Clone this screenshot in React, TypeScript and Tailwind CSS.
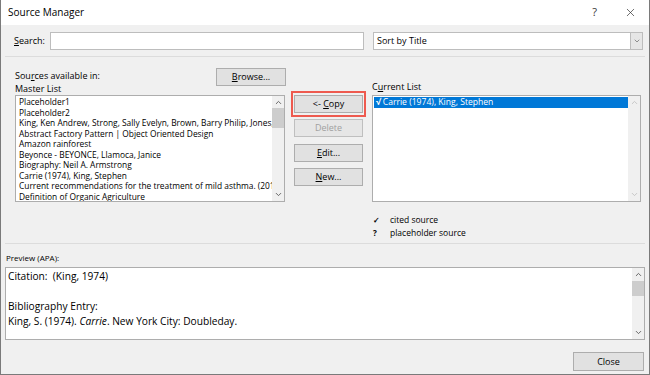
import { ChevronDown, ChevronUp, X } from 'lucide-react'

const ui = { fontFamily: '"Open Sans", "Noto Sans", sans-serif' }
const preview = { fontFamily: '"Open Sans", "Noto Sans", sans-serif' }

const masterList = [
  'Placeholder1',
  'Placeholder2',
  'King, Ken Andrew, Strong, Sally Evelyn, Brown, Barry Philip, Jones, Julie',
  'Abstract Factory Pattern | Object Oriented Design',
  'Amazon rainforest',
  'Beyonce - BEYONCE, Llamoca, Janice',
  'Biography: Neil A. Armstrong',
  'Carrie (1974), King, Stephen',
  'Current recommendations for the treatment of mild asthma. (2010), Sh',
  'Definition of Organic Agriculture',
]

// ---------------------------------------------------------------------------
// Scrollbar
// ---------------------------------------------------------------------------
function ScrollBar({ thumbTop, thumbHeight, disabled }: { thumbTop?: number; thumbHeight?: number; disabled?: boolean }) {
  const arrow = disabled ? 'text-[#c4c4c4]' : 'text-[#606060]'
  return (
    <div className="relative flex w-[12px] shrink-0 flex-col items-center justify-between bg-[#f0f0f0]">
      <ChevronUp size={9} strokeWidth={2.5} className={`mt-[2px] ${arrow}`} />
      {thumbHeight ? (
        <div className="absolute left-0 w-[12px] bg-[#cdcdcd]" style={{ top: thumbTop, height: thumbHeight }} />
      ) : null}
      <ChevronDown size={9} strokeWidth={2.5} className={`mb-[2px] ${arrow}`} />
    </div>
  )
}

function Btn({ children, disabled, className = '' }: { children: React.ReactNode; disabled?: boolean; className?: string }) {
  return (
    <div
      className={`flex h-[18px] items-center justify-center border border-[#adadad] bg-[#e1e1e1] text-[9px] ${disabled ? 'text-[#a0a0a0] border-[#bfbfbf] bg-[#e6e6e6]' : 'text-black'} ${className}`}
    >
      {children}
    </div>
  )
}

export default function App() {
  return (
    <div className="flex h-[375px] w-[650px] flex-col overflow-hidden border border-t-0 border-[#7a7a7a] bg-[#f0f0f0] text-black" style={ui}>
      {/* Title bar */}
      <div className="flex h-[25px] shrink-0 items-center bg-white pl-[7px] pr-[12px] text-[10px]">
        <span>Source Manager</span>
        <span className="ml-auto mr-[27px] text-[11px] text-[#333]">?</span>
        <X size={13} strokeWidth={1.3} className="text-[#333]" />
      </div>

      {/* Search row */}
      <div className="mt-[7px] flex h-[18px] items-center pr-[6px] text-[9px]">
        <span className="w-[49px] pl-[13px]"><u>S</u>earch:</span>
        <div className="h-[18px] w-[314px] border border-[#bdbdbd] bg-white" />
        <div className="ml-[9px] flex h-[18px] flex-1 items-center border border-[#bdbdbd] bg-white pl-[3px]">
          <span>Sort by Title</span>
          <div className="ml-auto flex h-full w-[12px] items-center justify-center border-l border-[#bdbdbd] bg-[#e6e6e6]">
            <ChevronDown size={8} strokeWidth={2} className="text-[#606060]" />
          </div>
        </div>
      </div>

      <div className="mx-[4px] mt-[6px] h-px bg-[#dcdcdc]" />

      {/* Main section */}
      <div className="mt-[11px] grid grid-cols-[270px_69px_269px] gap-x-[9px] pl-[14px] text-[9px]">
        {/* Master list column */}
        <div className="flex flex-col">
          <div className="flex h-[26px] items-start justify-between">
            <div className="flex flex-col leading-[13px] pt-px">
              <span>Sou<u>r</u>ces available in:</span>
              <span>Master List</span>
            </div>
            <Btn className="w-[70px] mr-[-1px]"><u>B</u>rowse...</Btn>
          </div>
          <div className="mt-[1px] flex h-[107px] border border-[#adadad] bg-white">
            <div className="flex-1 overflow-hidden pl-[3px] pt-px text-[8.4px] leading-[10.5px] whitespace-nowrap">
              {masterList.map((s) => (
                <div key={s}>{s}</div>
              ))}
            </div>
            <ScrollBar thumbTop={12} thumbHeight={20} />
          </div>
        </div>

        {/* Buttons column */}
        <div className="flex flex-col pt-[27px]">
          <div className="relative">
            <div className="absolute -inset-x-[3px] -top-[4px] -bottom-[4px] border-2 border-[#ee5a4f]" />
            <Btn>&lt;-&nbsp;<u>C</u>opy</Btn>
          </div>
          <Btn disabled className="mt-[6px]">Delete</Btn>
          <Btn className="mt-[7px]"><u>E</u>dit...</Btn>
          <Btn className="mt-[6px]"><u>N</u>ew...</Btn>
        </div>

        {/* Current list column */}
        <div className="flex flex-col">
          <div className="flex h-[26px] items-end pb-[1px] leading-[13px]">
            <span>C<u>u</u>rrent List</span>
          </div>
          <div className="mt-[1px] flex h-[107px] border border-[#adadad] bg-white">
            <div className="flex-1 pl-px pt-px">
              <div className="flex h-[11px] items-center bg-[#0078d7] pl-[2px] text-[8.6px] text-white leading-[11px]">
                <span className="mr-[2px] font-bold">√</span>Carrie (1974), King, Stephen
              </div>
            </div>
            <ScrollBar disabled />
          </div>

          <div className="mt-[11px] flex flex-col pl-[1px] text-[8.5px] leading-[13px]">
            <div className="flex"><span className="w-[17px] text-[8px] font-bold">✓</span>cited source</div>
            <div className="flex"><span className="w-[17px] text-[8px] font-bold">?</span>placeholder source</div>
          </div>
        </div>
      </div>

      <div className="mx-[4px] mt-[4px] h-px bg-[#dcdcdc]" />

      {/* Preview */}
      <div className="mt-[9px] pl-[5px] text-[8px] leading-[10px]">Preview (APA):</div>
      <div className="mx-[4px] mt-[4px] flex h-[73px] border border-[#adadad] bg-white" style={preview}>
        <div className="flex-1 pl-[2px] pt-[1px] text-[10.2px] leading-[15px]">
          <div>Citation:&nbsp; (King, 1974)</div>
          <div>&nbsp;</div>
          <div>Bibliography Entry:</div>
          <div>King, S. (1974). <i>Carrie</i>. New York City: Doubleday.</div>
        </div>
        <ScrollBar thumbTop={13} thumbHeight={15} />
      </div>

      <div className="mt-[12px] flex justify-end pr-[5px]">
        <Btn className="w-[71px] h-[19px]">Close</Btn>
      </div>
    </div>
  )
}
